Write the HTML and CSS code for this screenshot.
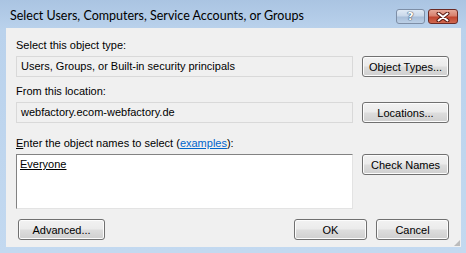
FILE: index.html
```html
<!DOCTYPE html>
<html lang="en">

<head>
    <meta charset="UTF-8">
    <title>Select Users, Computers, Service Accounts, or Groups</title>
    <link rel="stylesheet" href="styles.css">
</head>

<body>
    <div class="window">
        <div class="titlebar">
            <span class="title">Select Users, Computers, Service Accounts, or Groups</span>
            <div class="caption-buttons">
                <div class="cap-btn help">?</div>
                <div class="cap-btn close">
                    <svg width="14" height="10" viewBox="0 0 14 10">
                        <path d="M2.5 1.5 L11.5 8.5 M11.5 1.5 L2.5 8.5" stroke="#5a1a12" stroke-width="4" stroke-linecap="round" />
                        <path d="M2.5 1.5 L11.5 8.5 M11.5 1.5 L2.5 8.5" stroke="#ffffff" stroke-width="2" stroke-linecap="round" />
                    </svg>
                </div>
            </div>
        </div>

        <div class="client">
            <div class="label first">Select this object type:</div>
            <div class="row">
                <div class="field">Users, Groups, or Built-in security principals</div>
                <button class="btn">Object Types...</button>
            </div>

            <div class="label second">From this location:</div>
            <div class="row">
                <div class="field">webfactory.ecom-webfactory.de</div>
                <button class="btn">Locations...</button>
            </div>

            <div class="label third"><u>E</u>nter the object names to select (<a href="#" class="link">examples</a>):</div>
            <div class="row">
                <div class="names"><u>Everyone</u></div>
                <button class="btn">Check Names</button>
            </div>

            <div class="footer">
                <button class="btn">Advanced...</button>
                <div class="footer-right">
                    <button class="btn small">OK</button>
                    <button class="btn small">Cancel</button>
                </div>
            </div>
            <div class="grip"></div>
        </div>
    </div>
</body>

</html>
```

FILE: styles.css
```css
body {
    margin: 0;
    font-family: "Liberation Sans", Arial, sans-serif;
    font-size: 11px;
    color: #000;
}

.window {
    width: 466px;
    height: 253px;
    box-sizing: border-box;
    padding: 0 5px 6px 6px;
    background: linear-gradient(to bottom, #aac4e2 0px, #bad2ec 30px, #c3d9f0 100%);
    display: flex;
    flex-direction: column;
}

.titlebar {
    height: 28px;
    display: flex;
    align-items: flex-start;
    justify-content: space-between;
}

.title {
    font-family: "Lato", "Noto Sans", sans-serif;
    font-size: 12.5px;
    margin: 8px 0 0 4px;
    color: #000;
}

.caption-buttons {
    display: flex;
    margin: 9px 3px 0 0;
    gap: 3px;
}

.cap-btn {
    height: 15px;
    box-sizing: border-box;
    border: 1px solid #7d8ea6;
    border-radius: 3px;
    display: flex;
    align-items: center;
    justify-content: center;
}

.help {
    width: 29px;
    background: linear-gradient(to bottom, #e0eaf5 0%, #c9d8ea 45%, #a9bfd9 55%, #bcd0e7 100%);
    font-family: "DejaVu Sans", sans-serif;
    font-weight: bold;
    font-size: 11px;
    color: #fff;
    text-shadow: 0 0 1px #3c4e66, 0 0 1px #3c4e66, 0 0 1px #3c4e66;
}

.close {
    width: 30px;
    border-color: #6b2a24;
    background: linear-gradient(to bottom, #e6a898 0%, #d7806d 45%, #c0452f 55%, #d0684f 100%);
}

.client {
    flex: 1;
    background-color: #f0f0f0;
    padding: 0 11px 0 10px;
    position: relative;
}

.label {
    height: 13px;
    line-height: 13px;
    margin-bottom: 4px;
}

.label.first {
    margin-top: 11px;
}

.label.second {
    margin-top: 8px;
}

.label.third {
    margin-top: 14px;
}

.row {
    display: flex;
    align-items: flex-start;
    gap: 9px;
}

.field {
    width: 337px;
    height: 21px;
    box-sizing: border-box;
    border: 1px solid #d9d9d9;
    padding: 3px 4px;
    line-height: 13px;
    background-color: #f0f0f0;
}

.names {
    width: 337px;
    height: 55px;
    box-sizing: border-box;
    border: 1px solid #e3e3e3;
    border-top-color: #828282;
    border-left-color: #828282;
    background-color: #fff;
    padding: 3px 3px;
    line-height: 13px;
}

.btn {
    width: 87px;
    height: 21px;
    box-sizing: border-box;
    border: 1px solid #707070;
    border-radius: 3px;
    background: linear-gradient(to bottom, #f2f2f2 0%, #ebebeb 48%, #dddddd 52%, #cfcfcf 100%);
    font-family: "Liberation Sans", Arial, sans-serif;
    font-size: 11px;
    color: #000;
    padding: 0;
    box-shadow: inset 0 0 0 1px #fcfcfc;
}

.btn.small {
    width: 73px;
}

.link {
    color: #0066cc;
}

.footer {
    display: flex;
    justify-content: space-between;
    margin-top: 10px;
    padding-left: 2px;
    padding-right: 1px;
}

.footer-right {
    display: flex;
    gap: 9px;
}

.grip {
    position: absolute;
    right: 1px;
    bottom: 1px;
    width: 6px;
    height: 6px;
    background: radial-gradient(circle, #b8b8b8 0.7px, transparent 0.8px) 0 0 / 2px 2px;
    clip-path: polygon(100% 0, 100% 100%, 0 100%);
}
```
